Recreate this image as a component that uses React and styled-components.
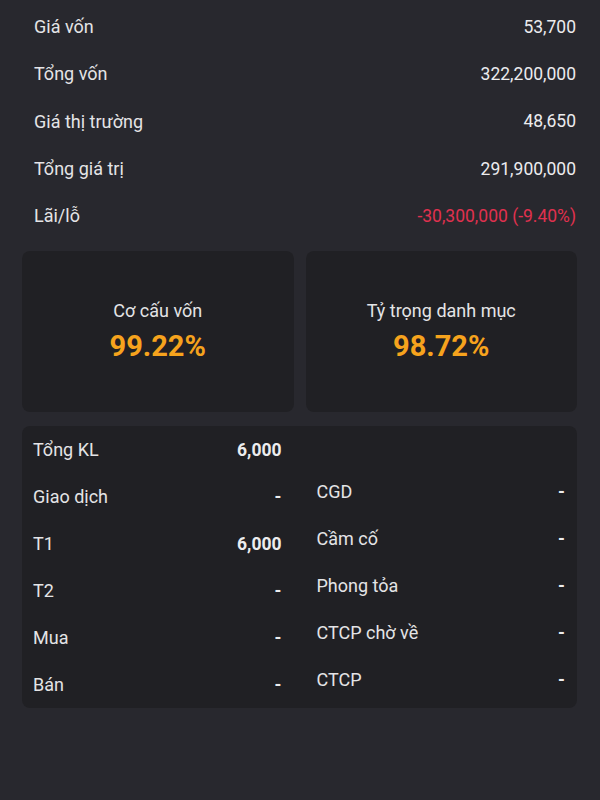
import styled, { createGlobalStyle } from "styled-components";

const GlobalStyle = createGlobalStyle`
  html, body {
    margin: 0;
    padding: 0;
    background: #28282e;
  }
  body {
    font-family: Roboto, "Noto Sans", sans-serif;
    color: #e8e8ea;
  }
`;

const Page = styled.div`
  min-height: 800px;
  padding: 3px 23px 0 22px;
  box-sizing: border-box;
`;

const Summary = styled.div`
  display: flex;
  flex-direction: column;
`;

const SummaryRow = styled.div`
  display: flex;
  align-items: center;
  justify-content: space-between;
  height: 47.3px;
  padding: 0 1px 0 12px;
  font-size: 17.5px;
`;

const Label = styled.span`
  color: #e4e4e6;
  font-size: 18px;
`;

const Value = styled.span`
  color: ${props => props.color || "#ececee"};
  font-weight: ${props => (props.bold ? 700 : 400)};
`;

const Cards = styled.div`
  display: grid;
  grid-template-columns: 1fr 1fr;
  gap: 12px;
  margin-top: 12px;
`;

const Card = styled.div`
  height: 161px;
  background: #202024;
  border-radius: 8px;
  display: flex;
  flex-direction: column;
  align-items: center;
  justify-content: center;
`;

const CardTitle = styled.div`
  font-size: 18px;
  color: #e4e4e6;
  line-height: 22px;
`;

const CardValue = styled.div`
  font-size: 29px;
  font-weight: 700;
  color: #f6a31d;
  line-height: 36px;
  margin-top: 6px;
`;

const Holdings = styled.div`
  margin-top: 14px;
  background: #202024;
  border-radius: 8px;
  display: grid;
  grid-template-columns: 1fr 1fr;
  column-gap: 35px;
  padding: 0 12px 0 11px;
`;

const Column = styled.div`
  display: flex;
  flex-direction: column;
  padding-top: ${props => props.offset || 0}px;
`;

const HoldRow = styled.div`
  display: flex;
  align-items: center;
  justify-content: space-between;
  height: 47px;
  font-size: 17.5px;
`;

const summary = [
  ["Giá vốn", "53,700"],
  ["Tổng vốn", "322,200,000"],
  ["Giá thị trường", "48,650"],
  ["Tổng giá trị", "291,900,000"],
  ["Lãi/lỗ", "-30,300,000 (-9.40%)", "#e0314f"],
];

const left = [
  ["Tổng KL", "6,000"],
  ["Giao dịch", "-"],
  ["T1", "6,000"],
  ["T2", "-"],
  ["Mua", "-"],
  ["Bán", "-"],
];

const right = [
  ["CGD", "-"],
  ["Cầm cố", "-"],
  ["Phong tỏa", "-"],
  ["CTCP chờ về", "-"],
  ["CTCP", "-"],
];

export default function App() {
  return (
    <>
      <GlobalStyle />
      <Page>
        <Summary>
          {summary.map(([label, value, color]) => (
            <SummaryRow key={label}>
              <Label>{label}</Label>
              <Value color={color}>{value}</Value>
            </SummaryRow>
          ))}
        </Summary>

        <Cards>
          <Card>
            <CardTitle>Cơ cấu vốn</CardTitle>
            <CardValue>99.22%</CardValue>
          </Card>
          <Card>
            <CardTitle>Tỷ trọng danh mục</CardTitle>
            <CardValue>98.72%</CardValue>
          </Card>
        </Cards>

        <Holdings>
          <Column>
            {left.map(([label, value]) => (
              <HoldRow key={label}>
                <Label>{label}</Label>
                <Value bold>{value}</Value>
              </HoldRow>
            ))}
          </Column>
          <Column offset={42}>
            {right.map(([label, value]) => (
              <HoldRow key={label}>
                <Label>{label}</Label>
                <Value bold>{value}</Value>
              </HoldRow>
            ))}
          </Column>
        </Holdings>
      </Page>
    </>
  );
}
